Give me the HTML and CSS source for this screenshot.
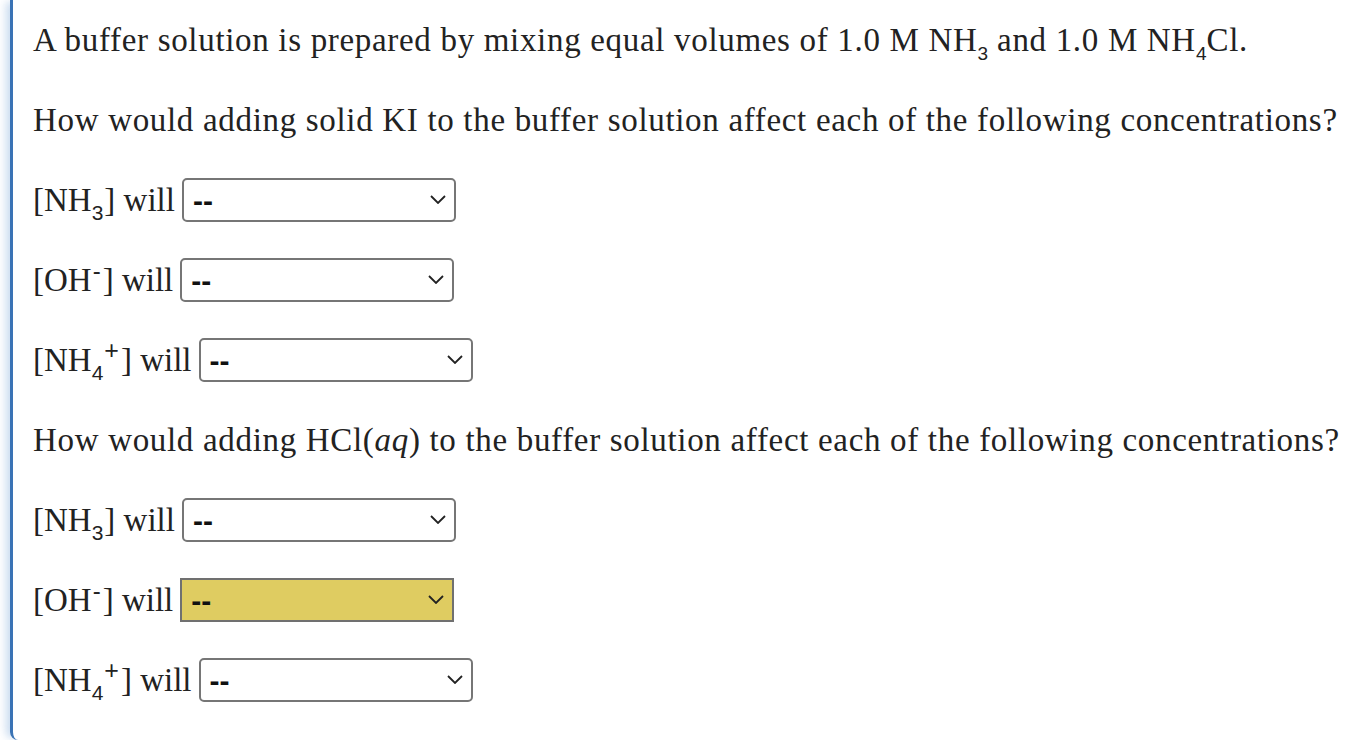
FILE: index.html
```html
<!DOCTYPE html>
<html>
<head>
<meta charset="utf-8">
<link rel="stylesheet" href="styles.css">
</head>
<body>
<div class="panel">
  <p class="q">A buffer solution is prepared by mixing equal volumes of 1.0 M NH<sub class="s">3</sub> and 1.0 M NH<sub class="s">4</sub>Cl.</p>
  <p class="q">How would adding solid KI to the buffer solution affect each of the following concentrations?</p>
  <div class="row"><span class="lbl">[NH<sub class="s">3</sub>] will</span><span class="sel"><select><option>--</option></select><svg class="chev" viewBox="0 0 16 9"><path d="M1 1 L8 8 L15 1" /></svg></span></div>
  <div class="row"><span class="lbl">[OH<sup class="p m">-</sup>] will</span><span class="sel"><select><option>--</option></select><svg class="chev" viewBox="0 0 16 9"><path d="M1 1 L8 8 L15 1" /></svg></span></div>
  <div class="row"><span class="lbl">[NH<sub class="s">4</sub><sup class="p">+</sup>] will</span><span class="sel"><select><option>--</option></select><svg class="chev" viewBox="0 0 16 9"><path d="M1 1 L8 8 L15 1" /></svg></span></div>
  <p class="q">How would adding HCl(<i>aq</i>) to the buffer solution affect each of the following concentrations?</p>
  <div class="row"><span class="lbl">[NH<sub class="s">3</sub>] will</span><span class="sel"><select><option>--</option></select><svg class="chev" viewBox="0 0 16 9"><path d="M1 1 L8 8 L15 1" /></svg></span></div>
  <div class="row"><span class="lbl">[OH<sup class="p m">-</sup>] will</span><span class="sel hl"><select><option>--</option></select><svg class="chev" viewBox="0 0 16 9"><path d="M1 1 L8 8 L15 1" /></svg></span></div>
  <div class="row"><span class="lbl">[NH<sub class="s">4</sub><sup class="p">+</sup>] will</span><span class="sel"><select><option>--</option></select><svg class="chev" viewBox="0 0 16 9"><path d="M1 1 L8 8 L15 1" /></svg></span></div>
</div>
</body>
</html>
```
FILE: styles.css
```css
html, body {
  margin: 0;
  padding: 0;
  background: #fff;
}
body {
  color: #222;
  font-family: "Liberation Serif", "Times New Roman", serif;
  overflow: hidden;
}
.panel {
  margin-left: 10px;
  height: 740px;
  box-sizing: border-box;
  border-left: 3px solid #3a73b5;
  border-bottom-left-radius: 8px;
  box-shadow: -6px 0 8px -2px rgba(120, 165, 215, 0.4);
  padding: 18px 0 0 20px;
  display: flex;
  flex-direction: column;
  gap: 36px;
}
.q {
  margin: 0;
  height: 44px;
  line-height: 44px;
  font-size: 33px;
  white-space: nowrap;
  letter-spacing: 0.68px;
}
.q .s {
  letter-spacing: 0;
  font-size: 19px;
  margin: 0;
}
.s {
  font-family: "Liberation Sans", Arial, sans-serif;
  font-size: 21px;
  vertical-align: -9px;
  line-height: 0;
  margin: 0 1px 0 0;
}
.p {
  font-family: "Liberation Sans", Arial, sans-serif;
  font-size: 25px;
  vertical-align: 12px;
  line-height: 0;
  margin-right: 2px;
}
.p.m {
  font-size: 24px;
  vertical-align: 12px;
  margin: 0 2px 0 1px;
}
.row {
  height: 44px;
  display: flex;
  align-items: center;
  gap: 7px;
}
.lbl {
  font-size: 33px;
  line-height: 44px;
  white-space: nowrap;
}
.sel {
  position: relative;
  width: 274px;
  height: 44px;
  display: block;
}
.sel select {
  appearance: none;
  -webkit-appearance: none;
  width: 100%;
  height: 100%;
  box-sizing: border-box;
  border: 2px solid #767676;
  border-radius: 5px;
  background: #fff;
  color: #111;
  font-family: "Liberation Sans", Arial, sans-serif;
  font-size: 30px;
  font-weight: bold;
  padding: 0 0 0 9px;
  margin: 0;
  outline: none;
}
.sel.hl select {
  background: #dfcc61;
  border-color: #707070;
  border-radius: 0;
}
.chev {
  position: absolute;
  right: 10px;
  top: 17px;
  width: 16px;
  height: 9px;
  pointer-events: none;
}
.chev path {
  fill: none;
  stroke: #222;
  stroke-width: 1.8;
}
```
